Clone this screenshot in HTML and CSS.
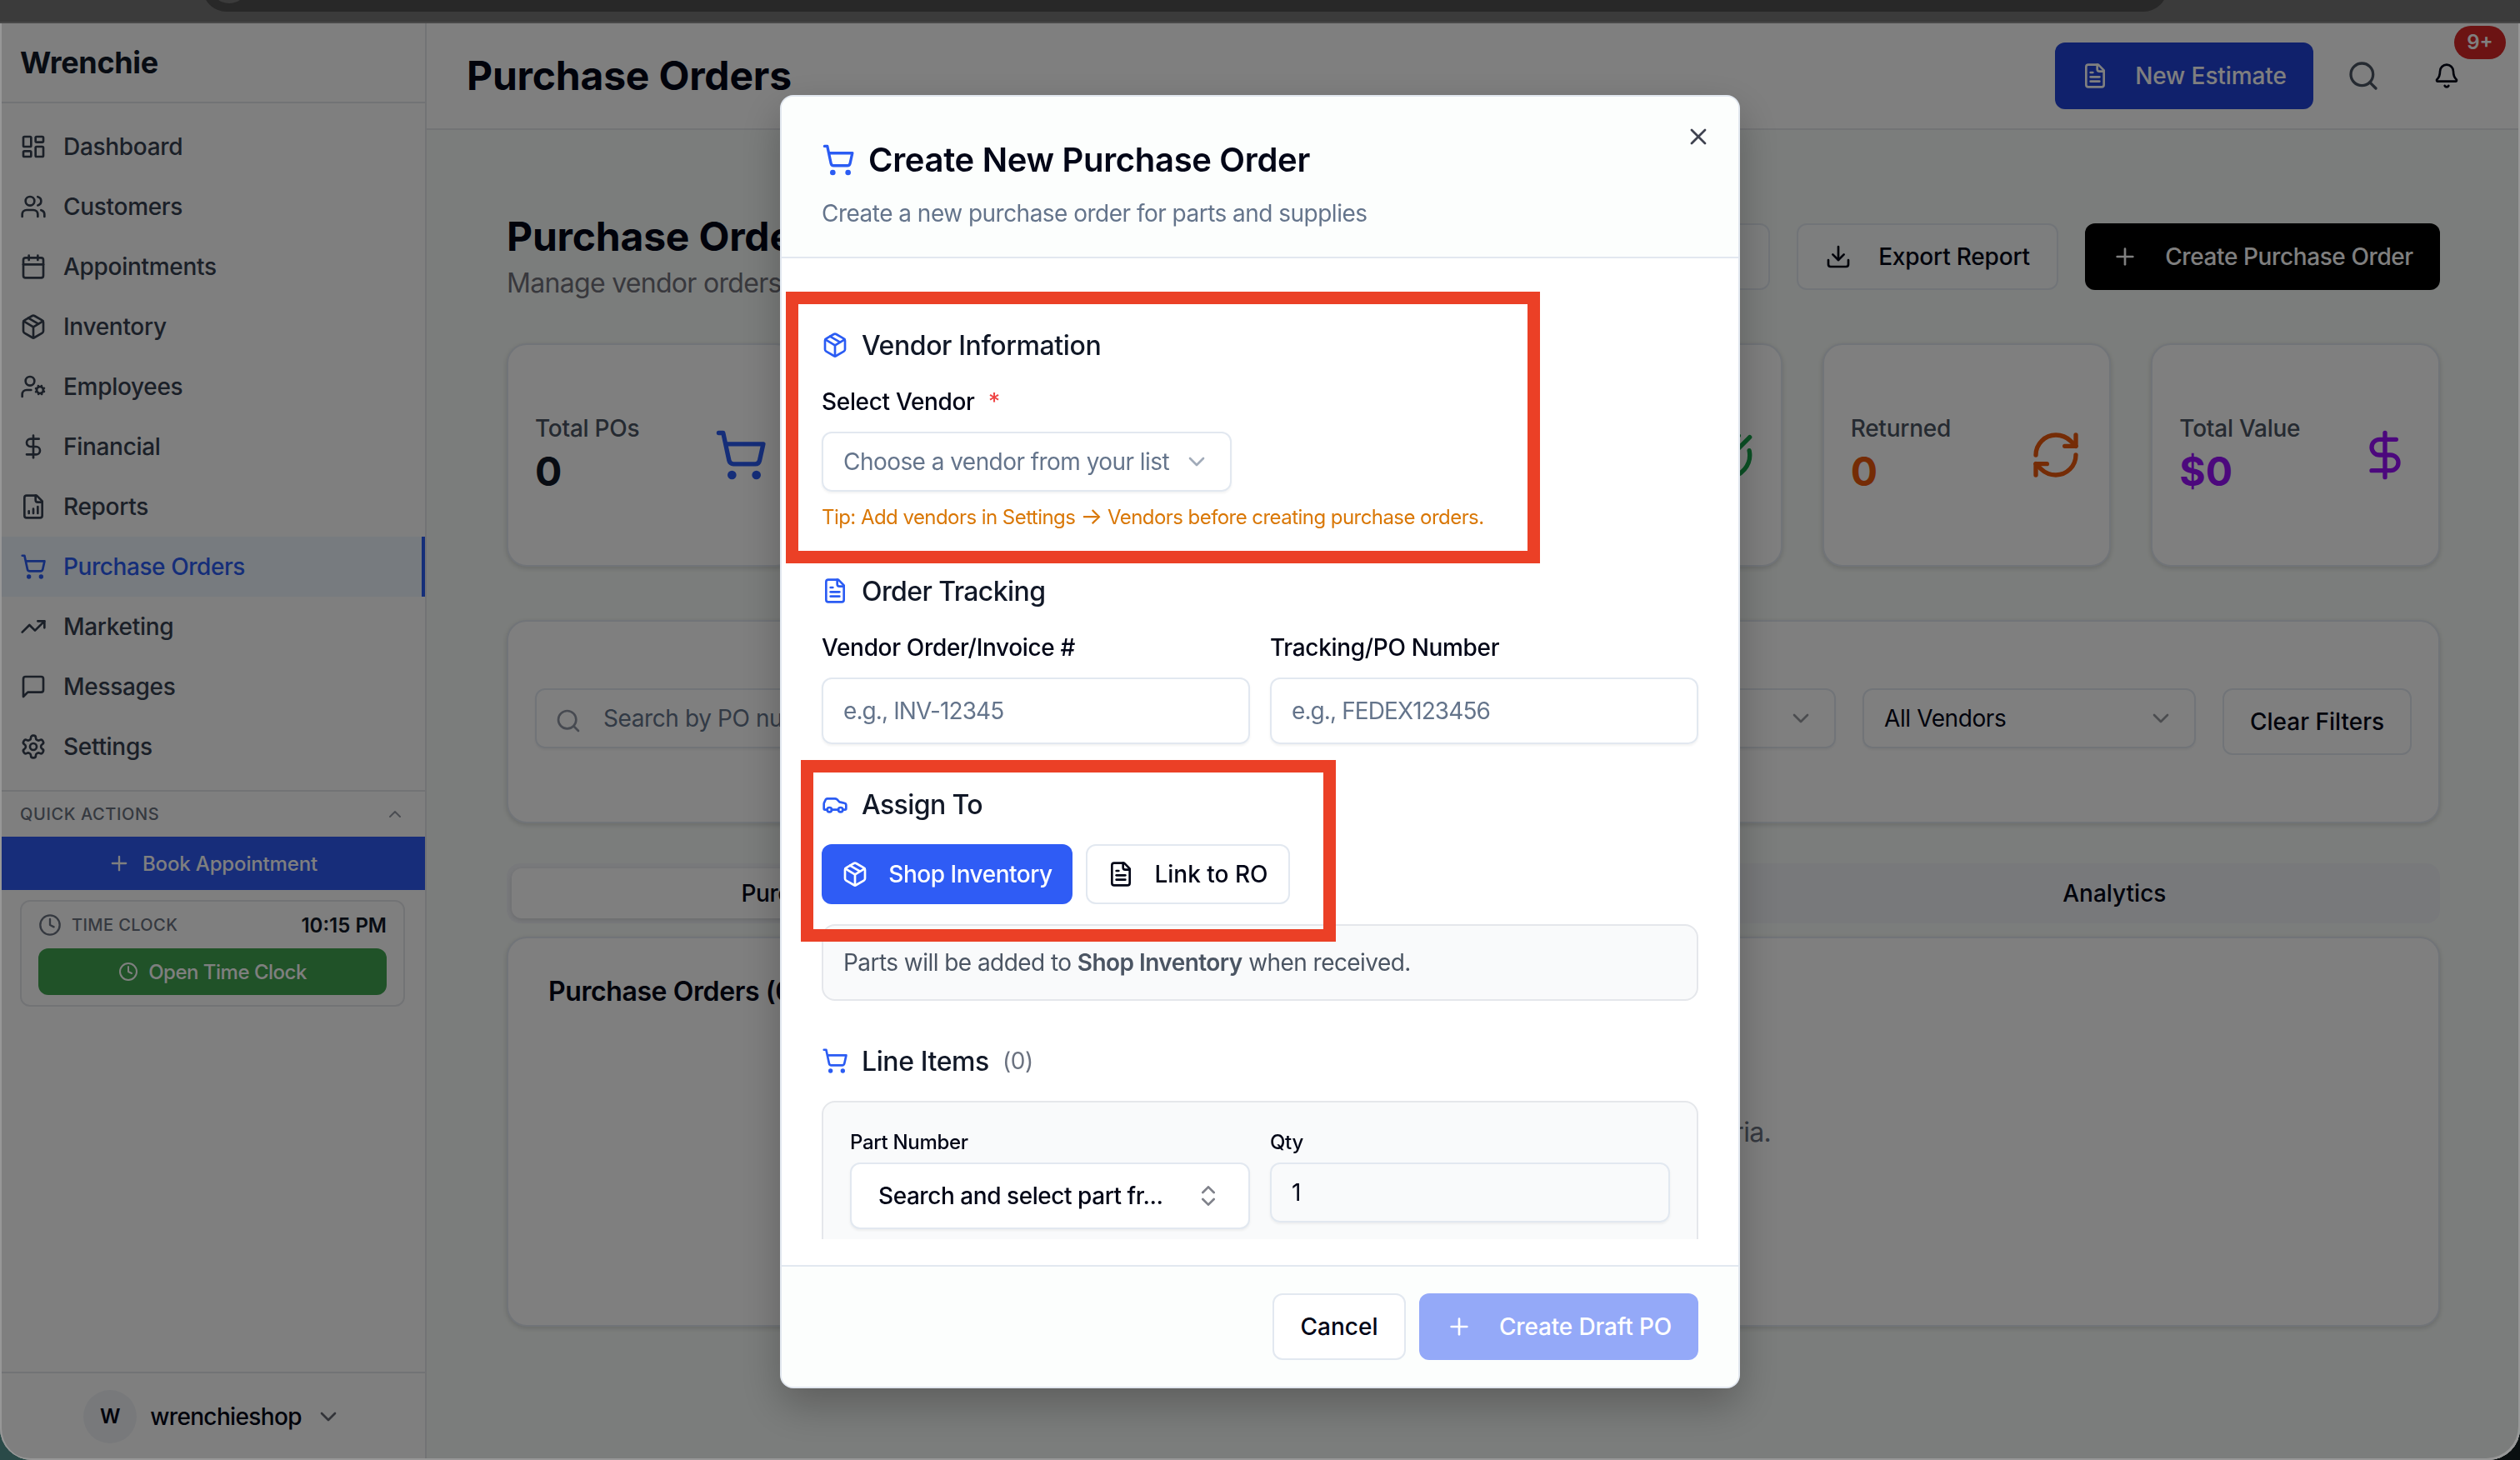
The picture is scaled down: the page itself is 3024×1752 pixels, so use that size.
FILE: index.html
```html
<!DOCTYPE html>
<html lang="en">
<head>
    <meta charset="utf-8">
    <title>Wrenchie - Purchase Orders</title>
    <link rel="stylesheet" href="styles.css">
</head>
<body>
    <!-- icon sprite -->
    <svg class="sprite">
        <symbol id="i-dashboard" viewBox="0 0 24 24"><rect width="7" height="9" x="3" y="3" rx="1"/><rect width="7" height="5" x="14" y="3" rx="1"/><rect width="7" height="9" x="14" y="12" rx="1"/><rect width="7" height="5" x="3" y="16" rx="1"/></symbol>
        <symbol id="i-users" viewBox="0 0 24 24"><path d="M16 21v-2a4 4 0 0 0-4-4H6a4 4 0 0 0-4 4v2"/><circle cx="9" cy="7" r="4"/><path d="M22 21v-2a4 4 0 0 0-3-3.87"/><path d="M16 3.13a4 4 0 0 1 0 7.75"/></symbol>
        <symbol id="i-calendar" viewBox="0 0 24 24"><path d="M8 2v4"/><path d="M16 2v4"/><rect width="18" height="18" x="3" y="4" rx="2"/><path d="M3 10h18"/></symbol>
        <symbol id="i-package" viewBox="0 0 24 24"><path d="M11 21.73a2 2 0 0 0 2 0l7-4A2 2 0 0 0 21 16V8a2 2 0 0 0-1-1.73l-7-4a2 2 0 0 0-2 0l-7 4A2 2 0 0 0 3 8v8a2 2 0 0 0 1 1.73z"/><path d="M12 22V12"/><path d="m3.3 7 7.703 4.734a2 2 0 0 0 1.994 0L20.7 7"/><path d="m7.5 4.27 9 5.15"/></symbol>
        <symbol id="i-user-cog" viewBox="0 0 24 24"><circle cx="9" cy="7" r="4"/><path d="M10 15H6a4 4 0 0 0-4 4v2"/><circle cx="18" cy="15" r="3"/><path d="m21.7 16.4-.9-.3"/><path d="m15.2 13.9-.9-.3"/><path d="m16.6 18.7.3-.9"/><path d="m19.1 12.2.3-.9"/><path d="m19.6 18.7-.4-1"/><path d="m16.8 12.3-.4-1"/><path d="m14.3 16.6 1-.4"/><path d="m20.7 13.8 1-.4"/></symbol>
        <symbol id="i-dollar" viewBox="0 0 24 24"><path d="M12 2v20"/><path d="M17 5H9.5a3.5 3.5 0 0 0 0 7h5a3.5 3.5 0 0 1 0 7H6"/></symbol>
        <symbol id="i-report" viewBox="0 0 24 24"><path d="M15 2H6a2 2 0 0 0-2 2v16a2 2 0 0 0 2 2h12a2 2 0 0 0 2-2V7Z"/><path d="M14 2v4a2 2 0 0 0 2 2h4"/><path d="M8 18v-2"/><path d="M12 18v-4"/><path d="M16 18v-6"/></symbol>
        <symbol id="i-cart" viewBox="0 0 24 24"><circle cx="8" cy="21" r="1"/><circle cx="19" cy="21" r="1"/><path d="M2.05 2.05h2l2.66 12.42a2 2 0 0 0 2 1.58h9.78a2 2 0 0 0 1.95-1.57l1.65-7.43H5.12"/></symbol>
        <symbol id="i-trending" viewBox="0 0 24 24"><path d="M22 7 13.5 15.5l-5-5L2 17"/><path d="M16 7h6v6"/></symbol>
        <symbol id="i-message" viewBox="0 0 24 24"><path d="M21 15a2 2 0 0 1-2 2H7l-4 4V5a2 2 0 0 1 2-2h14a2 2 0 0 1 2 2z"/></symbol>
        <symbol id="i-settings" viewBox="0 0 24 24"><path d="M12.22 2h-.44a2 2 0 0 0-2 2v.18a2 2 0 0 1-1 1.73l-.43.25a2 2 0 0 1-2 0l-.15-.08a2 2 0 0 0-2.73.73l-.22.38a2 2 0 0 0 .73 2.73l.15.1a2 2 0 0 1 1 1.72v.51a2 2 0 0 1-1 1.74l-.15.09a2 2 0 0 0-.73 2.73l.22.38a2 2 0 0 0 2.73.73l.15-.08a2 2 0 0 1 2 0l.43.25a2 2 0 0 1 1 1.73V20a2 2 0 0 0 2 2h.44a2 2 0 0 0 2-2v-.18a2 2 0 0 1 1-1.73l.43-.25a2 2 0 0 1 2 0l.15.08a2 2 0 0 0 2.73-.73l.22-.39a2 2 0 0 0-.73-2.73l-.15-.08a2 2 0 0 1-1-1.74v-.5a2 2 0 0 1 1-1.74l.15-.09a2 2 0 0 0 .73-2.73l-.22-.38a2 2 0 0 0-2.73-.73l-.15.08a2 2 0 0 1-2 0l-.43-.25a2 2 0 0 1-1-1.73V4a2 2 0 0 0-2-2z"/><circle cx="12" cy="12" r="3"/></symbol>
        <symbol id="i-up" viewBox="0 0 24 24"><path d="m18 15-6-6-6 6"/></symbol>
        <symbol id="i-down" viewBox="0 0 24 24"><path d="m6 9 6 6 6-6"/></symbol>
        <symbol id="i-updown" viewBox="0 0 24 24"><path d="m7 15 5 5 5-5"/><path d="m7 9 5-5 5 5"/></symbol>
        <symbol id="i-plus" viewBox="0 0 24 24"><path d="M5 12h14"/><path d="M12 5v14"/></symbol>
        <symbol id="i-clock" viewBox="0 0 24 24"><circle cx="12" cy="12" r="10"/><path d="M12 6v6l4 2"/></symbol>
        <symbol id="i-file" viewBox="0 0 24 24"><path d="M15 2H6a2 2 0 0 0-2 2v16a2 2 0 0 0 2 2h12a2 2 0 0 0 2-2V7Z"/><path d="M14 2v4a2 2 0 0 0 2 2h4"/><path d="M10 9H8"/><path d="M16 13H8"/><path d="M16 17H8"/></symbol>
        <symbol id="i-search" viewBox="0 0 24 24"><circle cx="11" cy="11" r="8"/><path d="m21 21-4.3-4.3"/></symbol>
        <symbol id="i-bell" viewBox="0 0 24 24"><path d="M10.268 21a2 2 0 0 0 3.464 0"/><path d="M3.262 15.326A1 1 0 0 0 4 17h16a1 1 0 0 0 .74-1.673C19.41 13.956 18 12.499 18 8A6 6 0 0 0 6 8c0 4.499-1.411 5.956-2.738 7.326"/></symbol>
        <symbol id="i-download" viewBox="0 0 24 24"><path d="M21 15v4a2 2 0 0 1-2 2H5a2 2 0 0 1-2-2v-4"/><path d="m7 10 5 5 5-5"/><path d="M12 15V3"/></symbol>
        <symbol id="i-check" viewBox="0 0 24 24"><path d="M21.801 10A10 10 0 1 1 17 3.335"/><path d="m9 11 3 3L22 4"/></symbol>
        <symbol id="i-refresh" viewBox="0 0 24 24"><path d="M3 12a9 9 0 0 1 9-9 9.75 9.75 0 0 1 6.74 2.74L21 8"/><path d="M21 3v5h-5"/><path d="M21 12a9 9 0 0 1-9 9 9.75 9.75 0 0 1-6.74-2.74L3 16"/><path d="M8 16H3v5"/></symbol>
        <symbol id="i-car" viewBox="0 0 24 24"><path d="M19 17h2c.6 0 1-.4 1-1v-3c0-.9-.7-1.7-1.5-1.9C18.7 10.6 16 10 16 10s-1.3-1.4-2.2-2.3c-.5-.4-1.1-.7-1.8-.7H5c-.6 0-1.1.4-1.4.9l-1.4 2.9A3.7 3.7 0 0 0 2 12v4c0 .6.4 1 1 1h2"/><circle cx="7" cy="17" r="2"/><path d="M9 17h6"/><circle cx="17" cy="17" r="2"/></symbol>
        <symbol id="i-x" viewBox="0 0 24 24"><path d="M18 6 6 18"/><path d="m6 6 12 12"/></symbol>
    </svg>

    <div class="browser-bar"><div class="address"><span></span></div></div>

    <div class="app">
        <aside class="sidebar">
            <div class="brand">Wrenchie</div>
            <nav class="nav">
                <a class="nav-item"><svg><use href="#i-dashboard"/></svg>Dashboard</a>
                <a class="nav-item"><svg><use href="#i-users"/></svg>Customers</a>
                <a class="nav-item"><svg><use href="#i-calendar"/></svg>Appointments</a>
                <a class="nav-item"><svg><use href="#i-package"/></svg>Inventory</a>
                <a class="nav-item"><svg><use href="#i-user-cog"/></svg>Employees</a>
                <a class="nav-item"><svg><use href="#i-dollar"/></svg>Financial</a>
                <a class="nav-item"><svg><use href="#i-report"/></svg>Reports</a>
                <a class="nav-item active"><svg><use href="#i-cart"/></svg>Purchase Orders</a>
                <a class="nav-item"><svg><use href="#i-trending"/></svg>Marketing</a>
                <a class="nav-item"><svg><use href="#i-message"/></svg>Messages</a>
                <a class="nav-item"><svg><use href="#i-settings"/></svg>Settings</a>
            </nav>
            <div class="quick">
                <div class="quick-head"><span>QUICK ACTIONS</span><svg><use href="#i-up"/></svg></div>
                <button class="book"><svg><use href="#i-plus"/></svg>Book Appointment</button>
                <div class="clock-card">
                    <div class="clock-row">
                        <svg><use href="#i-clock"/></svg>
                        <span class="clock-label">TIME CLOCK</span>
                        <span class="clock-time">10:15 PM</span>
                    </div>
                    <button class="open-clock"><svg><use href="#i-clock"/></svg>Open Time Clock</button>
                </div>
            </div>
            <div class="account">
                <span class="avatar">W</span>
                <span class="account-name">wrenchieshop</span>
                <svg><use href="#i-down"/></svg>
            </div>
        </aside>

        <div class="main">
            <header class="topbar">
                <h1>Purchase Orders</h1>
                <div class="topbar-actions">
                    <button class="btn btn-estimate"><svg><use href="#i-file"/></svg>New Estimate</button>
                    <svg class="top-search"><use href="#i-search"/></svg>
                    <div class="bell"><svg><use href="#i-bell"/></svg><span class="badge">9+</span></div>
                </div>
            </header>

            <div class="content">
                <div class="page-head">
                    <div>
                        <h2>Purchase Orders</h2>
                        <p>Manage vendor orders</p>
                    </div>
                    <div class="page-actions">
                        <button class="btn btn-outline"><svg><use href="#i-refresh"/></svg>Refresh</button>
                        <button class="btn btn-outline export"><svg><use href="#i-download"/></svg>Export Report</button>
                        <button class="btn btn-black"><svg><use href="#i-plus"/></svg>Create Purchase Order</button>
                    </div>
                </div>

                <div class="stats">
                    <div class="card stat blue"><div><p>Total POs</p><b class="dark">0</b></div><svg><use href="#i-cart"/></svg></div>
                    <div class="card stat blue"><div><p>Draft</p><b>0</b></div><svg><use href="#i-file"/></svg></div>
                    <div class="card stat orange"><div><p>Ordered</p><b>0</b></div><svg><use href="#i-package"/></svg></div>
                    <div class="card stat green"><div><p>Received</p><b>0</b></div><svg><use href="#i-check"/></svg></div>
                    <div class="card stat orange"><div><p>Returned</p><b>0</b></div><svg><use href="#i-refresh"/></svg></div>
                    <div class="card stat purple"><div><p>Total Value</p><b>$0</b></div><svg><use href="#i-dollar"/></svg></div>
                </div>

                <div class="card filters">
                    <div class="field search"><svg><use href="#i-search"/></svg><span>Search by PO number</span></div>
                    <div class="field select"><span>All Status</span><svg><use href="#i-down"/></svg></div>
                    <div class="field select"><span>All Vendors</span><svg><use href="#i-down"/></svg></div>
                    <button class="btn btn-outline clear">Clear Filters</button>
                </div>

                <div class="tabs">
                    <div class="tab on">Purchase Orders</div>
                    <div class="tab">Vendors</div>
                    <div class="tab">Analytics</div>
                </div>

                <div class="card orders">
                    <h3>Purchase Orders (0)</h3>
                    <p>No purchase orders found matching your criteria.</p>
                </div>
            </div>
        </div>
    </div>

    <div class="overlay">
        <div class="modal">
            <div class="modal-head">
                <h2><svg><use href="#i-cart"/></svg>Create New Purchase Order</h2>
                <p>Create a new purchase order for parts and supplies</p>
                <svg class="close"><use href="#i-x"/></svg>
            </div>

            <div class="modal-body">
                <section class="vendor">
                    <h3><svg><use href="#i-package"/></svg>Vendor Information</h3>
                    <label>Select Vendor <i>*</i></label>
                    <div class="vendor-select"><span>Choose a vendor from your list</span><svg><use href="#i-down"/></svg></div>
                    <p class="tip">Tip: Add vendors in Settings <span>→</span> Vendors before creating purchase orders.</p>
                </section>

                <section class="tracking">
                    <h3><svg><use href="#i-file"/></svg>Order Tracking</h3>
                    <div class="two-col">
                        <div><label>Vendor Order/Invoice #</label><div class="input">e.g., INV-12345</div></div>
                        <div><label>Tracking/PO Number</label><div class="input">e.g., FEDEX123456</div></div>
                    </div>
                </section>

                <section class="assign">
                    <h3><svg><use href="#i-car"/></svg>Assign To</h3>
                    <div class="assign-btns">
                        <button class="btn btn-blue"><svg><use href="#i-package"/></svg>Shop Inventory</button>
                        <button class="btn btn-outline link-ro"><svg><use href="#i-file"/></svg>Link to RO</button>
                    </div>
                    <p class="note">Parts will be added to <b>Shop Inventory</b> when received.</p>
                </section>

                <section class="lines">
                    <h3><svg><use href="#i-cart"/></svg>Line Items <small>(0)</small></h3>
                    <div class="line-box two-col">
                        <div><label>Part Number</label><div class="part"><span>Search and select part fr...</span><svg><use href="#i-updown"/></svg></div></div>
                        <div><label>Qty</label><div class="qty">1</div></div>
                    </div>
                </section>
            </div>

            <div class="modal-foot">
                <button class="btn btn-outline cancel">Cancel</button>
                <button class="btn btn-draft"><svg><use href="#i-plus"/></svg>Create Draft PO</button>
            </div>
        </div>
    </div>

    <div class="mark mark-vendor"></div>
    <div class="mark mark-assign"></div>
</body>
</html>
```
FILE: styles.css
```css
*{
    box-sizing: border-box;
    margin: 0;
    padding: 0;
}
body{
    width: 3024px;
    height: 1752px;
    overflow: hidden;
    background: linear-gradient(90deg, #2a4a48 50%, #0a0f10 50%);
    font-family: Inter, "Liberation Sans", sans-serif;
    font-size: 28px;
    color: #020617;
}
svg{
    width: 32px;
    height: 32px;
    fill: none;
    stroke: currentColor;
    stroke-width: 2;
    stroke-linecap: round;
    stroke-linejoin: round;
    flex-shrink: 0;
}
.sprite{
    display: none;
}
button{
    font: inherit;
    color: inherit;
    border: none;
    background: none;
}

/* browser strip */
.browser-bar{
    height: 28px;
    overflow: hidden;
    background: #3b3b3b;
    border-bottom: 2px solid #484848;
}
.address{
    width: 2358px;
    height: 58px;
    margin: -44px 0 0 243px;
    padding: 2px 0 0 9px;
    background: #282828;
    border-radius: 29px;
}
.address span{
    display: block;
    width: 46px;
    height: 46px;
    border-radius: 50%;
    background: #3b3b3b;
}

.app{
    display: flex;
    height: 1724px;
    overflow: hidden;
    background: #fff;
    border-radius: 0 0 38px 38px;
}

/* sidebar */
.sidebar{
    width: 512px;
    border-right: 2px solid #e5e7eb;
    display: flex;
    flex-direction: column;
}
.brand{
    height: 96px;
    padding-left: 24px;
    line-height: 94px;
    font-size: 36px;
    font-weight: 700;
    letter-spacing: -0.35px;
    color: #111827;
    border-bottom: 2px solid #e5e7eb;
}
.nav{
    padding: 16px 0;
}
.nav-item{
    display: flex;
    align-items: center;
    gap: 20px;
    height: 72px;
    padding-left: 24px;
    font-weight: 500;
    letter-spacing: -0.3px;
    color: #374151;
}
.nav-item.active{
    letter-spacing: -0.43px;
    color: #2b5cf3;
    background: #eff6ff;
    border-right: 4px solid #2b5cf3;
}
.quick{
    border-top: 2px solid #e5e7eb;
}
.quick-head{
    display: flex;
    justify-content: space-between;
    align-items: center;
    height: 54px;
    padding: 0 24px;
    font-size: 20px;
    font-weight: 500;
    letter-spacing: 0.6px;
    color: #6b7280;
}
.quick-head svg{
    width: 24px;
    height: 24px;
    opacity: .7;
}
.book{
    display: flex;
    align-items: center;
    justify-content: center;
    gap: 14px;
    width: 100%;
    height: 64px;
    font-size: 24px;
    font-weight: 500;
    letter-spacing: -0.15px;
    color: #fff;
    background: #2f5bf5;
}
.book svg{
    width: 28px;
    height: 28px;
}
.clock-card{
    margin: 12px 24px 0;
    height: 128px;
    padding: 10px 20px;
    border: 2px solid #e5e7eb;
    border-radius: 12px;
}
.clock-row{
    display: flex;
    align-items: center;
    height: 36px;
    color: #6b7280;
}
.clock-row svg{
    width: 28px;
    height: 28px;
}
.clock-label{
    margin-left: 12px;
    font-size: 20px;
    font-weight: 500;
    letter-spacing: 0.4px;
}
.clock-time{
    margin-left: auto;
    font-size: 24px;
    font-weight: 600;
    color: #111827;
}
.open-clock{
    display: flex;
    align-items: center;
    justify-content: center;
    gap: 12px;
    width: 100%;
    height: 56px;
    margin-top: 10px;
    border-radius: 12px;
    font-size: 24px;
    font-weight: 500;
    letter-spacing: -0.5px;
    color: #fff;
    background: #40a550;
}
.open-clock svg{
    width: 24px;
    height: 24px;
}
.account{
    display: flex;
    align-items: center;
    justify-content: center;
    height: 106px;
    margin-top: auto;
    border-top: 2px solid #e5e7eb;
}
.avatar{
    width: 64px;
    height: 64px;
    margin-right: 16px;
    border-radius: 50%;
    background: #f1f3f7;
    text-align: center;
    line-height: 64px;
    font-size: 24px;
    font-weight: 600;
}
.account-name{
    margin-right: 16px;
    font-weight: 500;
    letter-spacing: -0.65px;
}
.account svg{
    opacity: .6;
}

/* top bar */
.main{
    flex: 1;
    background: #f7fbf8;
}
.topbar{
    display: flex;
    justify-content: space-between;
    align-items: center;
    height: 128px;
    padding: 0 72px 0 48px;
    background: #fff;
    border-bottom: 2px solid #e5e7eb;
}
.topbar h1, .page-head h2{
    font-size: 48px;
    font-weight: 700;
    line-height: 64px;
    letter-spacing: -0.2px;
}
.topbar-actions{
    display: flex;
    align-items: center;
}
.btn{
    display: flex;
    align-items: center;
    justify-content: center;
    height: 80px;
    border-radius: 12px;
    font-weight: 500;
    white-space: nowrap;
}
.btn svg{
    margin-right: 32px;
}
.btn-estimate{
    width: 310px;
    letter-spacing: -0.1px;
    color: #fff;
    background: #2042d9;
}
.top-search{
    width: 40px;
    height: 40px;
    margin: 0 64px 0 40px;
    color: #4b5563;
}
.bell{
    position: relative;
    height: 32px;
}
.badge{
    position: absolute;
    left: 25px;
    top: -44px;
    width: 62px;
    height: 40px;
    border-radius: 20px;
    background: #d82626;
    color: #fff;
    font-size: 24px;
    font-weight: 600;
    line-height: 40px;
    text-align: center;
}

/* page */
.content{
    padding: 96px 96px 0;
}
.page-head{
    display: flex;
    justify-content: space-between;
    height: 112px;
}
.page-head p{
    font-size: 32px;
    line-height: 48px;
    letter-spacing: -0.7px;
    color: #71717a;
}
.page-actions{
    display: flex;
    gap: 32px;
    padding-top: 16px;
}
.btn-outline{
    background: #fff;
    border: 2px solid #e2e8f0;
}
.page-actions .btn-outline{
    width: 250px;
    background: #fbfdfc;
}
.page-actions .export{
    width: 314px;
    letter-spacing: -0.2px;
}
.btn-black{
    width: 426px;
    letter-spacing: -0.4px;
    background: #000;
    color: #fff;
}
.card{
    background: #fff;
    border: 2px solid #e2e8f0;
    border-radius: 24px;
    box-shadow: 0 2px 6px rgba(0, 0, 0, 0.15);
}
.stats{
    display: grid;
    grid-template-columns: repeat(6, 1fr);
    gap: 48px;
    margin-top: 48px;
}
.stat{
    display: flex;
    align-items: center;
    justify-content: space-between;
    height: 268px;
    padding: 0 32px;
}
.stat p{
    line-height: 40px;
    font-weight: 500;
    letter-spacing: -0.25px;
    color: #4b5563;
}
.stat b{
    display: block;
    font-size: 48px;
    line-height: 64px;
}
.stat svg{
    width: 64px;
    height: 64px;
}
.blue{ color: #2b5cf3; }
.orange{ color: #ea580c; }
.green{ color: #16a34a; }
.purple{ color: #9810fa; }
.stat .dark{
    color: #111827;
}
.filters{
    display: flex;
    align-items: flex-start;
    gap: 32px;
    height: 244px;
    margin-top: 64px;
    padding: 80px 32px;
}
.field{
    display: flex;
    align-items: center;
    height: 72px;
    border: 2px solid #e2e8f0;
    border-radius: 12px;
    letter-spacing: -0.4px;
    box-shadow: 0 2px 3px rgba(0, 0, 0, 0.05);
}
.search{
    flex: 1;
    padding-left: 22px;
    color: #64748b;
}
.search svg{
    margin: 6px 26px 0 0;
    color: #8e95a3;
}
.select{
    justify-content: space-between;
    width: 400px;
    padding: 0 24px;
}
.select svg{
    opacity: .4;
}
.clear{
    width: 227px;
}
.tabs{
    display: flex;
    height: 72px;
    margin-top: 48px;
    padding: 6px;
    border-radius: 16px;
    background: #f1f3f7;
}
.tab{
    flex: 1;
    line-height: 60px;
    text-align: center;
    font-weight: 500;
    border-radius: 12px;
}
.tab.on{
    letter-spacing: -0.4px;
    background: #fff;
    box-shadow: 0 2px 6px rgba(0, 0, 0, 0.12);
}
.orders{
    height: 468px;
    margin-top: 16px;
    padding: 40px 48px;
}
.orders h3{
    font-size: 32px;
    font-weight: 600;
    line-height: 48px;
    letter-spacing: -0.4px;
}
.orders p{
    margin-top: 121px;
    text-align: center;
    font-size: 32px;
    line-height: 48px;
    letter-spacing: -0.65px;
    color: #6b7280;
}

/* dialog */
.overlay{
    position: fixed;
    inset: 28px 0 0 0;
    display: flex;
    align-items: center;
    justify-content: center;
    background: rgba(0, 0, 0, 0.5);
    border-radius: 0 0 38px 38px;
    box-shadow: inset 2px 0 #979797, inset -2px -2px #979797;
}
.modal{
    display: flex;
    flex-direction: column;
    width: 1152px;
    height: 1552px;
    border: 2px solid #e2e8f0;
    border-radius: 16px;
    background: #fff;
    overflow: hidden;
    box-shadow: 0 20px 50px rgba(0, 0, 0, 0.25);
}
.modal-head{
    position: relative;
    height: 194px;
    padding: 48px 48px 0;
    background: #fcfefd;
    border-bottom: 2px solid #e2e8f0;
}
.modal-head h2{
    display: flex;
    align-items: center;
    gap: 16px;
    height: 55px;
    font-size: 40px;
    font-weight: 600;
    letter-spacing: -0.32px;
}
.modal-head h2 svg{
    width: 40px;
    height: 40px;
    color: #2b5cf3;
}
.modal-head p{
    margin-top: 17px;
    line-height: 40px;
    letter-spacing: -0.52px;
    color: #64748b;
}
.modal-head .close{
    position: absolute;
    top: 32px;
    right: 32px;
    color: #3f4350;
}
.modal-body{
    height: 1177px;
    padding: 80px 48px 0;
    overflow: hidden;
}
.modal-body h3{
    display: flex;
    align-items: center;
    gap: 16px;
    height: 48px;
    font-size: 32px;
    font-weight: 500;
    letter-spacing: -0.4px;
    color: #111827;
}
.tracking h3, .assign h3{
    letter-spacing: -0.6px;
}
.modal-body h3 svg{
    color: #2b5cf3;
}
.modal-body h3 small{
    font-size: 28px;
    font-weight: 400;
    color: #6b7280;
}
.modal-body label{
    display: block;
    height: 28px;
    line-height: 28px;
    font-weight: 500;
    letter-spacing: -0.33px;
}
.modal-body label i{
    margin-left: 9px;
    font-style: normal;
    color: #ef4444;
}
.vendor label, .tracking label{
    margin: 30px 0 22px;
}
.vendor-select, .input, .part, .qty{
    display: flex;
    align-items: center;
    justify-content: space-between;
    padding: 0 24px;
    border: 2px solid #e2e8f0;
    border-radius: 12px;
    color: #64748b;
    white-space: nowrap;
    box-shadow: 0 2px 3px rgba(0, 0, 0, 0.05);
}
.vendor-select{
    width: 492px;
    height: 72px;
    letter-spacing: -0.55px;
}
.vendor-select svg{
    opacity: .6;
}
.tip{
    height: 32px;
    margin-top: 15px;
    font-size: 24px;
    line-height: 32px;
    letter-spacing: -0.55px;
    color: #d97706;
}
.tip span{
    font-size: 28px;
    line-height: 24px;
}
.tracking{
    margin-top: 48px;
}
.two-col{
    display: grid;
    grid-template-columns: 1fr 1fr;
    gap: 24px;
}
.input{
    height: 80px;
    letter-spacing: -0.9px;
}
.assign{
    margin-top: 48px;
}
.assign-btns{
    display: flex;
    gap: 16px;
    margin-top: 24px;
}
.assign-btns .btn{
    height: 72px;
}
.assign-btns svg{
    margin-right: 24px;
}
.btn-blue{
    width: 301px;
    letter-spacing: -0.48px;
    color: #fff;
    background: #2f5cf5;
}
.link-ro{
    width: 245px;
}
.note{
    height: 92px;
    margin-top: 24px;
    padding-left: 24px;
    border: 2px solid #e5e7eb;
    border-radius: 16px;
    background: #f9fafb;
    line-height: 88px;
    letter-spacing: -0.55px;
    color: #4b5563;
}
.note b{
    font-weight: 600;
}
.lines{
    margin-top: 48px;
}
.line-box{
    height: 400px;
    margin-top: 24px;
    padding: 32px;
    border: 2px solid #e5e7eb;
    border-radius: 16px;
    background: #f9fafb;
}
.line-box label{
    height: 32px;
    margin-bottom: 8px;
    line-height: 32px;
    font-size: 24px;
}
.part{
    height: 80px;
    padding: 0 32px;
    background: #fff;
    font-weight: 500;
    letter-spacing: -0.45px;
    color: #020617;
}
.part svg{
    opacity: .5;
}
.qty{
    height: 72px;
    color: #020617;
}
.modal-foot{
    display: flex;
    justify-content: flex-end;
    gap: 16px;
    flex: 1;
    margin-top: 31px;
    padding: 32px 48px;
    border-top: 2px solid #e2e8f0;
    background: #fcfefd;
}
.cancel{
    width: 160px;
}
.btn-draft{
    width: 335px;
    letter-spacing: -0.15px;
    color: #fff;
    background: #94a9f8;
}

/* highlight frames */
.mark{
    position: absolute;
    border: 15px solid #eb4026;
}
.mark-vendor{
    left: 943px;
    top: 350px;
    width: 905px;
    height: 326px;
}
.mark-assign{
    left: 961px;
    top: 912px;
    width: 642px;
    height: 218px;
}
```
